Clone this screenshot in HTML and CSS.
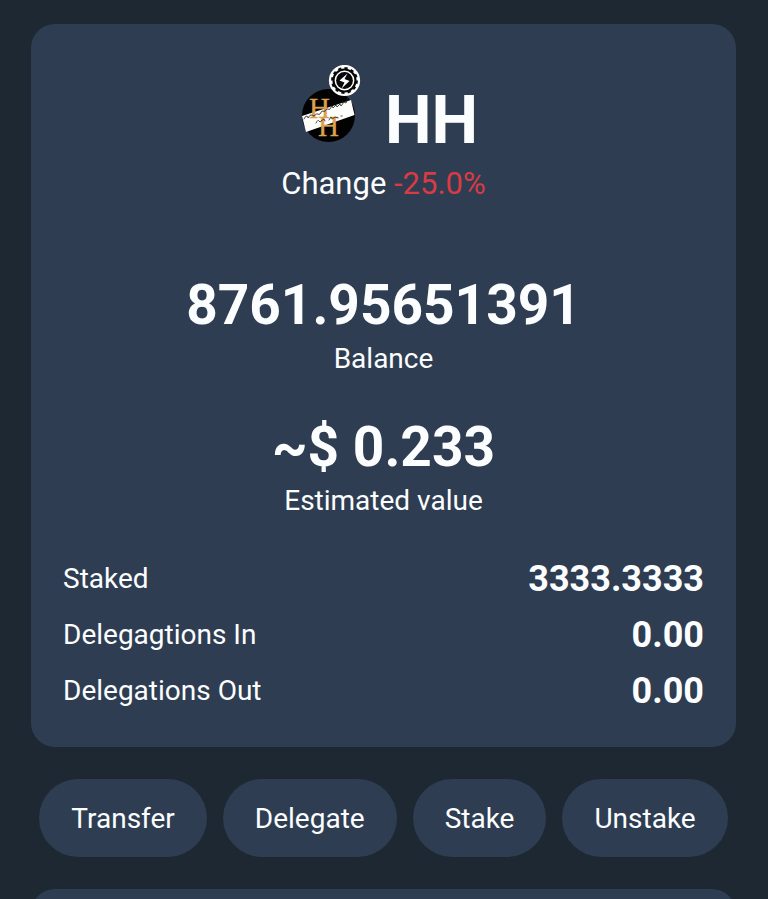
FILE: index.html
```html
<!DOCTYPE html>
<html lang="en">
<head>
<meta charset="utf-8">
<meta name="viewport" content="width=device-width, initial-scale=1">
<title>HH token</title>
<link rel="stylesheet" href="styles.css">
</head>
<body>
<main class="page">
  <section class="card summary">
    <header class="token">
      <svg class="logo" viewBox="0 0 60 78" aria-hidden="true">
        <circle cx="27.5" cy="50.5" r="26.5" fill="#020203"/>
        <path d="M1 51 50 35 53.500 50 5 67Z" fill="#fdfdfb"/>
        <g class="logo-initials">
          <text x="8" y="53">H</text>
          <text x="17" y="71">H</text>
        </g>
        <g fill="none" stroke="#222" stroke-width=".8" stroke-linecap="round">
          <path d="M3 54q2-4 3-3t1 2q2-4 4-3t2 1q3-3 4-2t2 0q2-4 3-3t2 0q2-3 3-2t2 0l2-3 1 2 3-3 1 2 3-3 1 2 3-4 2 1 2-5"/>
          <path d="M15 58q2-4 3-2t2 0l3-2 1 2M28 55l2-3 1 2 3-2 3 1M40 51h1"/>
        </g>
        <circle cx="43.500" cy="15.500" r="15.600" fill="#fff"/>
        <circle cx="43.500" cy="15.500" r="11" fill="none" stroke="#080808" stroke-width="2.200"/>
        <circle cx="43.500" cy="15.500" r="12.400" fill="none" stroke="#080808" stroke-width="2" pathLength="120" stroke-dasharray="5 5"/>
        <circle cx="43.500" cy="15.500" r="8.400" fill="#080808"/>
        <path d="M46.500 8.500 38.500 15.500l5 2-3 6 8-7.500-5-2Z" fill="#fff"/>
      </svg>
      <h1 class="symbol">HH</h1>
    </header>
    <p class="change">Change <span class="negative">-25.0%</span></p>
    <div class="figure">
      <p class="amount">8761.95651391</p>
      <p class="caption">Balance</p>
    </div>
    <div class="figure">
      <p class="amount">~$ 0.233</p>
      <p class="caption">Estimated value</p>
    </div>
    <dl class="stats">
      <div class="stat"><dt>Staked</dt><dd>3333.3333</dd></div>
      <div class="stat"><dt>Delegagtions In</dt><dd>0.00</dd></div>
      <div class="stat"><dt>Delegations Out</dt><dd>0.00</dd></div>
    </dl>
  </section>
  <div class="actions">
    <button type="button">Transfer</button>
    <button type="button">Delegate</button>
    <button type="button">Stake</button>
    <button type="button">Unstake</button>
  </div>
  <section class="card next"></section>
</main>
</body>
</html>
```
FILE: styles.css
```css
* {
  box-sizing: border-box;
  margin: 0;
}

html {
  scrollbar-width: none;
}

body {
  background: #1e2833;
  color: #fcfdfe;
  font: 28px/40px Roboto, sans-serif;
}

.page {
  display: flex;
  flex-direction: column;
  gap: 32px;
  min-height: 100vh;
  padding: 24px 32px 0 31px;
}

.card {
  background: #2e3d51;
  border-radius: 24px;
}

.summary {
  padding: 41px 32px 34px;
  text-align: center;
}

.token {
  display: flex;
  justify-content: center;
  align-items: baseline;
  gap: 24px;
  padding-left: 12px;
}

.logo {
  width: 60px;
  height: 78px;
}

.logo-initials {
  fill: #dda04d;
  stroke: #dda04d;
  stroke-width: 0.3px;
  font: 29px "Liberation Serif", serif;
}

.symbol {
  font-size: 66px;
  line-height: 72px;
}

.change {
  margin-top: 7px;
  font-size: 31px;
}

.negative {
  color: #d93b45;
}

.figure {
  margin-top: 34px;
}

.change + .figure {
  margin-top: 67px;
}

.amount {
  font-size: 55px;
  font-weight: 700;
  line-height: 68px;
}

.stats {
  display: grid;
  gap: 12px;
  margin-top: 36px;
}

.stat {
  display: flex;
  justify-content: space-between;
  align-items: center;
  line-height: 44px;
}

.stat dd {
  font-size: 36px;
  font-weight: 700;
}

.actions {
  display: flex;
  justify-content: center;
  flex-wrap: wrap;
  gap: 16px;
}

.actions button {
  padding: 21px 32px 19px;
  border: 0;
  border-radius: 40px;
  background: #2e3d51;
  color: inherit;
  font: inherit;
  line-height: 38px;
}

.next {
  flex: 1 0 auto;
  min-height: 48px;
}
```
